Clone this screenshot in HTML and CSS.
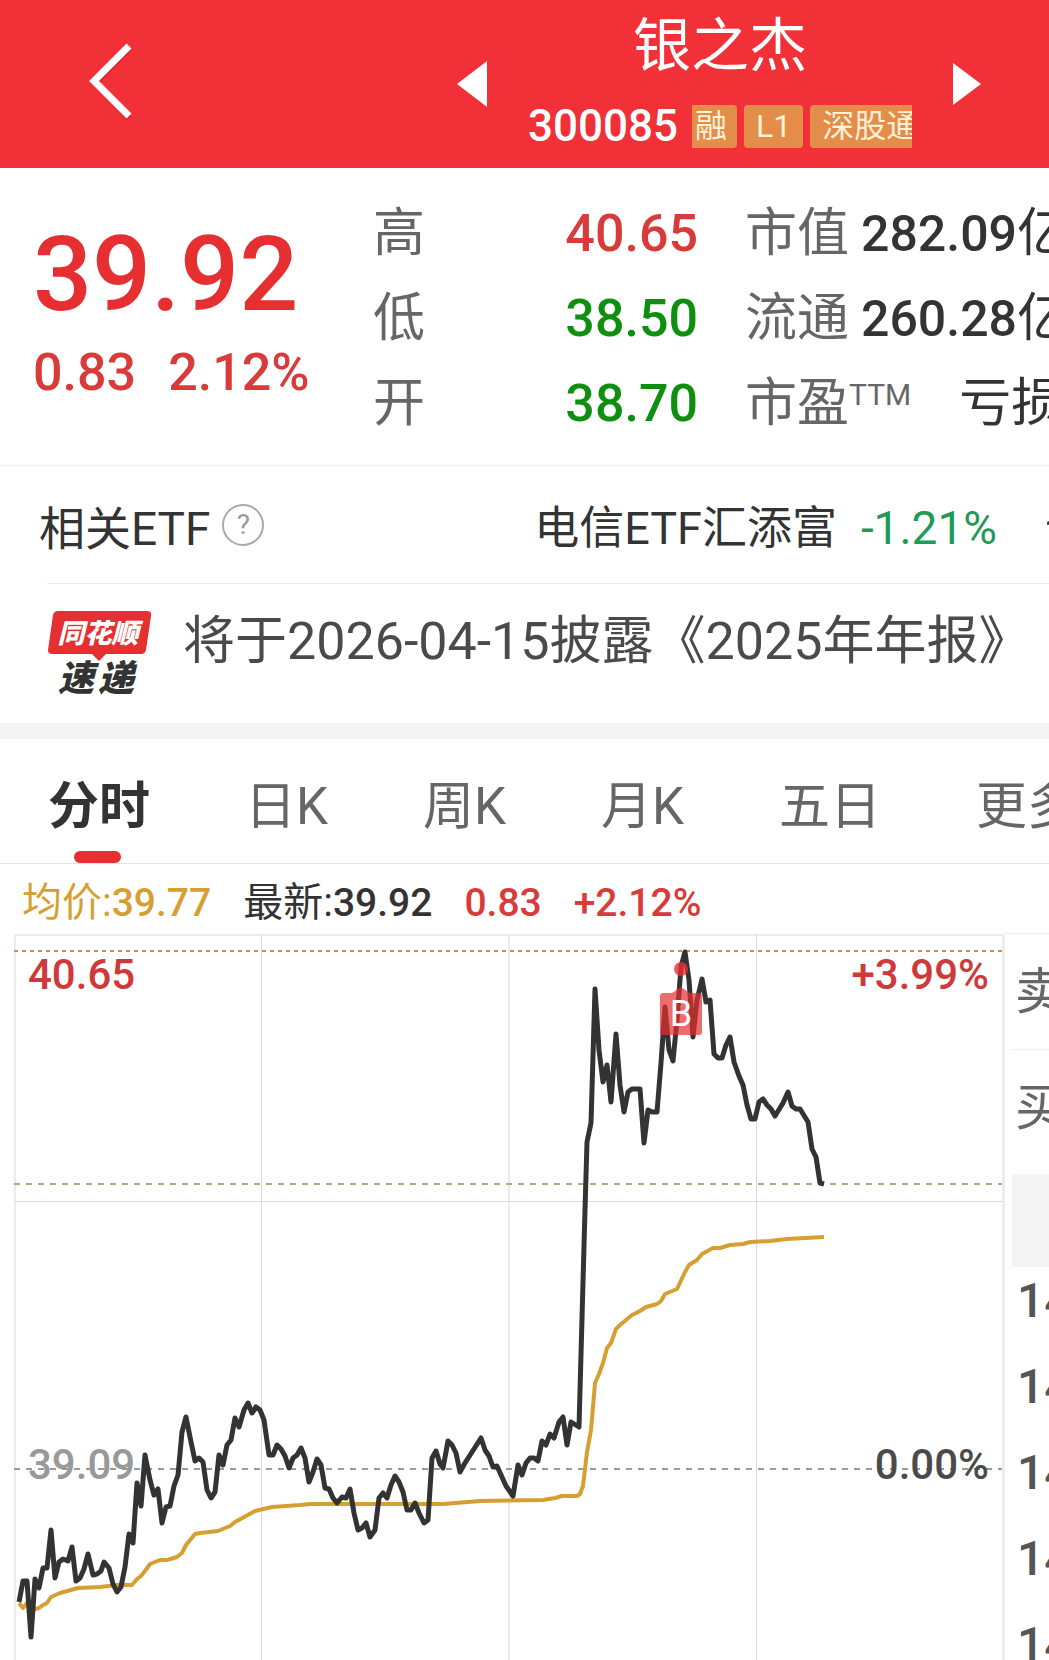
FILE: index.html
```html
<!DOCTYPE html>
<html lang="zh-CN">
<head>
    <meta charset="UTF-8">
    <meta name="viewport" content="width=device-width, initial-scale=1.0">
    <title>银之杰 300085</title>
    <link rel="stylesheet" href="styles.css">
</head>
<body>
    <header class="topbar">
        <button type="button" class="back" aria-label="返回">
            <svg width="48" height="84" viewBox="0 0 48 84"><path d="M42 7 L9 41 L42 77" fill="none" stroke="#c01f28" stroke-width="6" opacity=".5"/><path d="M42 4 L7 39 L42 74" fill="none" stroke="#fff" stroke-width="7"/></svg>
        </button>
        <div class="stock-nav">
            <button type="button" aria-label="上一只">
                <svg width="30" height="48" viewBox="0 0 30 48"><path d="M30 1v46L0 24z" fill="#fff"/></svg>
            </button>
            <div class="stock">
                <h1>银之杰</h1>
                <div class="stock-sub">
                    <span class="code">300085</span>
                    <div class="tags">
                        <span class="tag tag-first">融</span>
                        <span class="tag">L1</span>
                        <span class="tag">深股通</span>
                    </div>
                </div>
            </div>
            <button type="button" aria-label="下一只">
                <svg width="28" height="44" viewBox="0 0 28 44"><path d="M0 1v42l28-21z" fill="#fff"/></svg>
            </button>
        </div>
    </header>

    <section class="quote">
        <div class="price">
            <div class="price-now">39.92</div>
            <div class="price-change"><span>0.83</span><span>2.12%</span></div>
        </div>
        <dl class="range">
            <div><dt>高</dt><dd class="up">40.65</dd></div>
            <div><dt>低</dt><dd class="down">38.50</dd></div>
            <div><dt>开</dt><dd class="down">38.70</dd></div>
        </dl>
        <dl class="stats">
            <div><dt>市值</dt><dd>282.09<span class="unit">亿</span></dd></div>
            <div><dt>流通</dt><dd>260.28<span class="unit">亿</span></dd></div>
            <div><dt>市盈<sup>TTM</sup></dt><dd class="loss">亏损</dd></div>
        </dl>
    </section>

    <section class="etf">
        <span>相关ETF</span>
        <button type="button" class="help" aria-label="说明">?</button>
        <a href="#" class="etf-item"><span class="etf-name">电信ETF汇添富</span><span class="etf-rate">-1.21%</span></a>
        <svg class="etf-next" width="20" height="20" viewBox="0 0 20 20"><path d="M0 9l8-5" stroke="#333" stroke-width="3" fill="none"/></svg>
    </section>

    <section class="news">
        <svg class="news-logo" width="104" height="88" viewBox="0 0 104 88">
            <path d="M11 2h89q5 0 4 5l-5 34q-1 4-5 4H59l-7 7-7-7H5q-4 0-4-4L6 6q1-4 5-4z" fill="#e62f31"/>
            <text class="logo-top" x="51" y="34">同花顺</text>
            <text class="logo-bottom" x="29" y="82">速</text>
            <text class="logo-bottom" x="69" y="82">递</text>
        </svg>
        <a href="#">将于2026-04-15披露《2025年年报》</a>
    </section>

    <nav class="tabs">
        <a href="#" class="active">分时</a>
        <a href="#">日K</a>
        <a href="#">周K</a>
        <a href="#">月K</a>
        <a href="#">五日</a>
        <a href="#">更多</a>
    </nav>

    <div class="legend">
        <span class="avg">均价:<b>39.77</b></span>
        <span>最新:<b>39.92</b></span>
        <b class="up">0.83</b>
        <b class="up">+2.12%</b>
    </div>

    <main class="board">
        <div class="chart">
            <svg viewBox="0 0 991 726" preserveAspectRatio="xMinYMin meet">
                <g fill="none" shape-rendering="crispEdges">
                    <path d="M0 1h988M1 0v726M495 0v726" stroke="#ececec" stroke-width="2"/>
                    <path d="M989 0v726" stroke="#ececec" stroke-width="3"/>
                    <path d="M247 0v726M742 0v726M0 267h988" stroke="#dadada"/>
                    <path d="M0 17h988" stroke="#c4915c" stroke-width="2" stroke-dasharray="4 4"/>
                    <path d="M0 250h988" stroke="#b3aa83" stroke-width="2" stroke-dasharray="6 6"/>
                    <path d="M0 535h988" stroke="#999" stroke-width="2" stroke-dasharray="6 6"/>
                </g>
                <text class="axis axis-up" x="14" y="55">40.65</text>
                <text class="axis axis-up axis-end" x="975" y="55">+3.99%</text>
                <text class="axis axis-base" x="14" y="545">39.09</text>
                <text class="axis axis-end" x="975" y="545">0.00%</text>

                <!-- 均价线 -->
                <polyline class="line-avg" points="5,669 9,674 13,669 17,673 21,675 25,674 29,671 33,669 37,663 46,659 64,654 86,653 103,651 118,651 123,645 127,642 131,637 136,630 146,626 153,626 163,623 168,619 172,611 181,600 186,599 204,597 216,592 221,588 241,577 258,573 286,571 296,570 429,570 466,567 529,566 541,564 548,562 563,562 566,560 569,552 573,518 577,496 581,449 585,440 589,429 593,414 597,409 602,395 606,391 618,381 626,377 632,373 643,370 647,367 651,360 663,355 671,338 675,331 683,326 688,320 699,314 706,314 716,311 729,310 736,308 756,307 773,305 810,303"/>
                <!-- 分时线 -->
                <polyline class="line-price" points="5,668 9,647 13,647 17,703 21,645 25,654 29,634 33,634 37,596 41,644 45,628 49,625 54,627 58,613 62,647 66,644 70,635 74,620 79,641 83,640 87,637 90,628 95,634 99,650 103,658 107,653 111,633 115,600 119,609 123,549 127,572 131,521 136,546 140,561 144,555 148,589 152,573 156,572 160,552 164,541 168,498 172,483 176,503 181,527 185,524 189,528 193,556 197,564 201,558 205,521 209,531 213,511 217,506 221,484 225,493 230,476 234,469 238,479 242,473 246,476 250,486 255,521 259,521 263,511 267,515 271,522 275,534 279,524 283,521 287,514 291,524 295,548 299,538 303,525 307,531 311,554 315,555 319,564 323,569 328,563 332,564 336,555 340,579 344,596 348,594 352,589 356,603 361,596 365,564 369,559 373,564 377,551 381,542 385,548 389,558 393,576 397,576 401,569 405,579 410,589 414,586 418,524 422,517 426,530 429,534 434,507 438,511 442,519 446,538 451,529 467,504 471,516 475,522 479,533 483,532 492,552 499,562 504,531 508,541 512,529 516,524 520,524 524,527 528,507 532,511 536,500 540,504 545,488 549,483 553,511 557,488 565,493 571,276 573,208 577,189 581,55 585,116 589,148 593,131 597,168 602,100 606,151 610,178 614,158 618,155 626,155 630,209 634,176 638,178 643,178 647,129 651,73 655,116 659,127 663,86 667,33 671,18 675,46 679,103 683,66 688,45 692,68 696,66 700,120 704,124 708,124 712,111 716,103 720,128 725,142 729,151 733,171 737,185 741,185 745,168 749,165 753,171 757,175 761,182 769,169 774,158 778,172 782,175 786,175 794,188 798,215 802,223 806,249 810,250"/>

                <!-- 买入点 -->
                <circle cx="667" cy="35" r="7" fill="#e62f31" opacity=".8"/>
                <path d="M649 59h9l9-6 9 6h9q3 0 3 3v36q0 3-3 3h-36q-3 0-3-3V62q0-3 3-3z" fill="#e62f31" opacity=".7"/>
                <text class="buy" x="667" y="92">B</text>
            </svg>
        </div>
        <aside class="orders">
            <div class="order">卖</div>
            <div class="order">买</div>
            <div class="orders-head"></div>
            <ul>
                <li>14</li>
                <li>14</li>
                <li>14</li>
                <li>14</li>
                <li>14</li>
            </ul>
        </aside>
    </main>
</body>
</html>
```

FILE: styles.css
```css
* {
    box-sizing: border-box;
}

body {
    margin: 0;
    height: 100vh;
    display: flex;
    flex-direction: column;
    overflow: hidden;
    background: #fff;
    color: #333;
    font-family: Roboto, "Noto Sans CJK SC", sans-serif;
    white-space: nowrap;
}

body > * {
    flex-shrink: 0;
}

h1, dl, dd, ul {
    margin: 0;
    padding: 0;
    font-weight: 400;
}

a {
    color: inherit;
    text-decoration: none;
}

button {
    padding: 0;
    border: none;
    background: none;
    cursor: pointer;
}

svg {
    display: block;
}

.up {
    color: #d93a3a;
}

.down {
    color: #0f8f0f;
}

/* 顶栏 */
.topbar {
    display: flex;
    justify-content: space-between;
    height: 168px;
    padding: 0 68px 0 87px;
    background: #f23038;
    color: #fff;
}

.back {
    align-self: center;
    height: 90px;
}

.stock-nav {
    display: flex;
    align-items: center;
    justify-content: space-between;
    width: 524px;
}

.stock {
    height: 168px;
    padding-top: 10px;
    text-align: center;
}

.stock h1 {
    font-size: 58px;
    line-height: 72px;
}

.stock-sub {
    display: flex;
    align-items: center;
    gap: 14px;
    margin-top: 20px;
}

.code {
    font-size: 44px;
    line-height: 48px;
    font-weight: 500;
}

.tags {
    display: flex;
    gap: 7px;
    width: 220px;
    overflow: hidden;
}

.tag {
    flex: none;
    padding: 0 12px;
    border-radius: 4px;
    background: #e48d4b;
    color: #fff2d6;
    font-size: 32px;
    line-height: 43px;
}

.tag-first {
    padding: 0 10px 0 3px;
    border-radius: 0 4px 4px 0;
}

/* 报价 */
.quote {
    display: flex;
    height: 298px;
    padding-top: 23px;
    border-bottom: 1px solid #ececec;
}

.price {
    flex: none;
    width: 373px;
    padding: 26px 0 0 33px;
    color: #e62f31;
    font-weight: 500;
}

.price-now {
    font-size: 104px;
    line-height: 116px;
}

.price-change {
    display: flex;
    gap: 32px;
    color: #d93a3a;
    font-size: 52px;
    line-height: 80px;
}

.range, .stats {
    flex: none;
    font-size: 52px;
    line-height: 85px;
}

.range {
    width: 325px;
    margin-right: 47px;
}

.range div, .stats div {
    display: flex;
    justify-content: space-between;
}

.quote dt {
    color: #666;
}

.quote dd {
    font-weight: 500;
}

.stats {
    width: 320px;
}

.stats div {
    justify-content: flex-start;
    gap: 12px;
    height: 85px;
}

.stats dd {
    font-size: 50px;
}

.stats sup {
    position: relative;
    top: -16px;
    font-size: 30px;
    line-height: 30px;
    vertical-align: baseline;
}

.quote .unit, .quote .loss {
    font-size: 52px;
    font-weight: 400;
}

.quote .loss {
    padding-left: 36px;
}

/* 相关ETF */
.etf {
    display: flex;
    align-items: center;
    height: 117px;
    font-size: 46px;
    padding-left: 39px;
    overflow: hidden;
}

.help {
    width: 42px;
    height: 42px;
    margin-left: 12px;
    border: 2px solid #aaa;
    border-radius: 50%;
    color: #999;
    font: 28px/36px Roboto, sans-serif;
}

.etf-item {
    margin-left: auto;
}

.etf-name {
    font-size: 45px;
}

.etf-rate {
    margin-left: 24px;
    color: #229a57;
}

.etf-next {
    flex: none;
    width: 20px;
    margin: 0 -18px 0 50px;
}

/* 公告 */
.news {
    display: flex;
    height: 140px;
    margin-left: 47px;
    border-top: 1px solid #ececec;
    padding-top: 25px;
    color: #4a4a4a;
    font-size: 52px;
    line-height: 66px;
}

.news-logo {
    flex: none;
    margin-right: 32px;
}

.news-logo text {
    font-family: "Noto Sans CJK SC", sans-serif;
    font-style: italic;
    font-weight: 900;
    text-anchor: middle;
}

.logo-top {
    fill: #fff;
    font-size: 27px;
}

.logo-bottom {
    fill: #333;
    font-size: 36px;
}

/* 周期切换 */
.tabs {
    display: flex;
    gap: 95px;
    height: 141px;
    padding-left: 48px;
    border-top: 16px solid #f4f4f4;
    border-bottom: 1px solid #e4e4e4;
    color: #666;
    font-size: 51px;
    line-height: 135px;
}

.tabs a {
    flex: none;
    position: relative;
    height: 124px;
}

.tabs .active {
    color: #333;
    font-weight: 600;
}

.tabs .active::after {
    content: "";
    position: absolute;
    left: 26px;
    bottom: 0;
    width: 47px;
    height: 12px;
    border-radius: 6px;
    background: #e62f31;
}

.legend {
    display: flex;
    gap: 32px;
    height: 69px;
    padding-left: 22px;
    font-size: 40px;
    line-height: 78px;
}

.legend b {
    font-size: 39px;
    font-weight: 500;
}

.legend .avg {
    color: #d5a031;
}

/* 分时图 */
.board {
    display: flex;
    flex: 1;
    min-height: 0;
    padding-left: 14px;
    overflow: hidden;
}

.chart {
    flex: 1;
    min-width: 0;
    padding-top: 1px;
}

.chart svg {
    width: 100%;
}

.axis {
    fill: #4a4a4a;
    font-size: 42px;
    font-weight: 500;
}

.axis-up {
    fill: #d0393a;
}

.axis-base {
    fill: #999;
}

.axis-end {
    text-anchor: end;
}

.line-price, .line-avg {
    fill: none;
    stroke: #333;
    stroke-width: 5;
    stroke-linejoin: round;
}

.line-avg {
    stroke: #d5a031;
    stroke-width: 4;
}

.buy {
    fill: #fff;
    font-size: 36px;
    text-anchor: middle;
}

/* 盘口 */
.orders {
    flex: none;
    width: 44px;
    border-top: 1px solid #ececec;
    color: #666;
    font-size: 50px;
    overflow: hidden;
}

.order {
    height: 115px;
    margin-left: 7px;
    padding-left: 3px;
    line-height: 117px;
}

.order + .order {
    height: 125px;
    border-top: 1px solid #ececec;
}

.orders-head {
    height: 93px;
    margin-left: 7px;
    background: #f4f4f4;
}

.orders ul {
    display: grid;
    gap: 18px;
    padding-left: 12px;
    list-style: none;
    color: #555;
    font-size: 48px;
    font-weight: 500;
    line-height: 68px;
}
```
